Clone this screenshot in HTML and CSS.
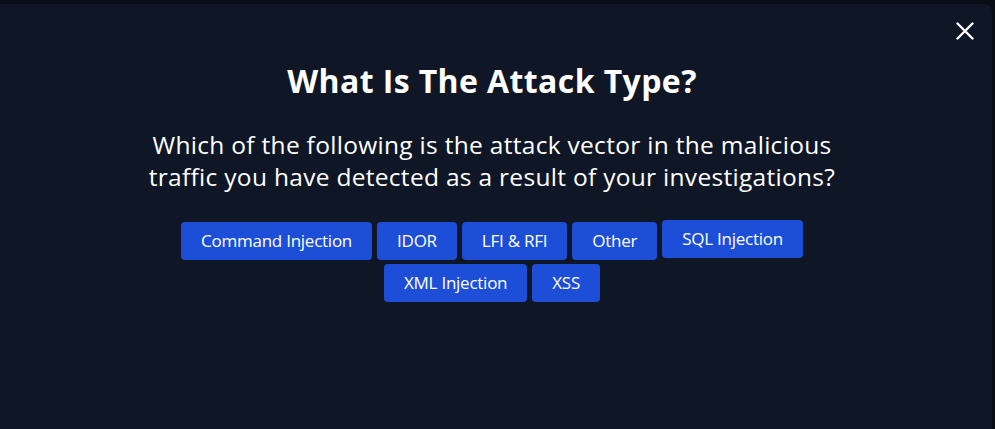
FILE: index.html
```html
<!DOCTYPE html>
<html lang="en">
<head>
<meta charset="utf-8">
<title>What Is The Attack Type?</title>
<link rel="stylesheet" href="styles.css">
</head>
<body>
  <div class="modal">
    <button class="close" aria-label="Close">
      <svg viewBox="0 0 18 18" width="18" height="18"><path d="M1.5 1.5 L16.5 16.5 M16.5 1.5 L1.5 16.5" stroke="#ffffff" stroke-width="2.4" stroke-linecap="round" fill="none"/></svg>
    </button>
    <div class="content">
      <h1 class="title">What Is The Attack Type?</h1>
      <p class="question">Which of the following is the attack vector in the malicious traffic you have detected as a result of your investigations?</p>
      <div class="options">
        <button class="opt">Command Injection</button>
        <button class="opt">IDOR</button>
        <button class="opt">LFI &amp; RFI</button>
        <button class="opt">Other</button>
        <button class="opt raised">SQL Injection</button>
        <button class="opt">XML Injection</button>
        <button class="opt">XSS</button>
      </div>
    </div>
  </div>
</body>
</html>
```
FILE: styles.css
```css
* { box-sizing: border-box; }
html, body { margin: 0; padding: 0; }
body {
  background: #090d14;
  height: 429px;
  overflow: hidden;
  font-family: "Open Sans", "Noto Sans", sans-serif;
  color: #ffffff;
}
.modal {
  position: relative;
  margin-top: 4px;
  margin-left: -8px;
  width: 1000px;
  height: 460px;
  background: #0f1726;
  border-radius: 8px;
}
.close {
  position: absolute;
  top: 18px;
  right: 18px;
  width: 18px;
  height: 18px;
  padding: 0;
  border: 0;
  background: transparent;
  display: flex;
}
.content {
  display: flex;
  flex-direction: column;
  align-items: center;
  padding-top: 59px;
}
.title {
  margin: 0;
  font-size: 32px;
  line-height: 36px;
  font-weight: 700;
  letter-spacing: 0.4px;
}
.question {
  margin: 30px 0 0;
  width: 700px;
  text-align: center;
  font-size: 24.5px;
  line-height: 32px;
  letter-spacing: 0.3px;
}
.options {
  margin-top: 29px;
  width: 640px;
  display: flex;
  flex-wrap: wrap;
  justify-content: center;
  column-gap: 5px;
  row-gap: 4px;
}
.opt {
  font-family: inherit;
  font-size: 17px;
  line-height: 28px;
  padding: 5px 20px;
  border: 0;
  border-radius: 4px;
  background: #1d4ed8;
  color: #ffffff;
  letter-spacing: -0.25px;
}
.raised { transform: translateY(-2px); }
```
